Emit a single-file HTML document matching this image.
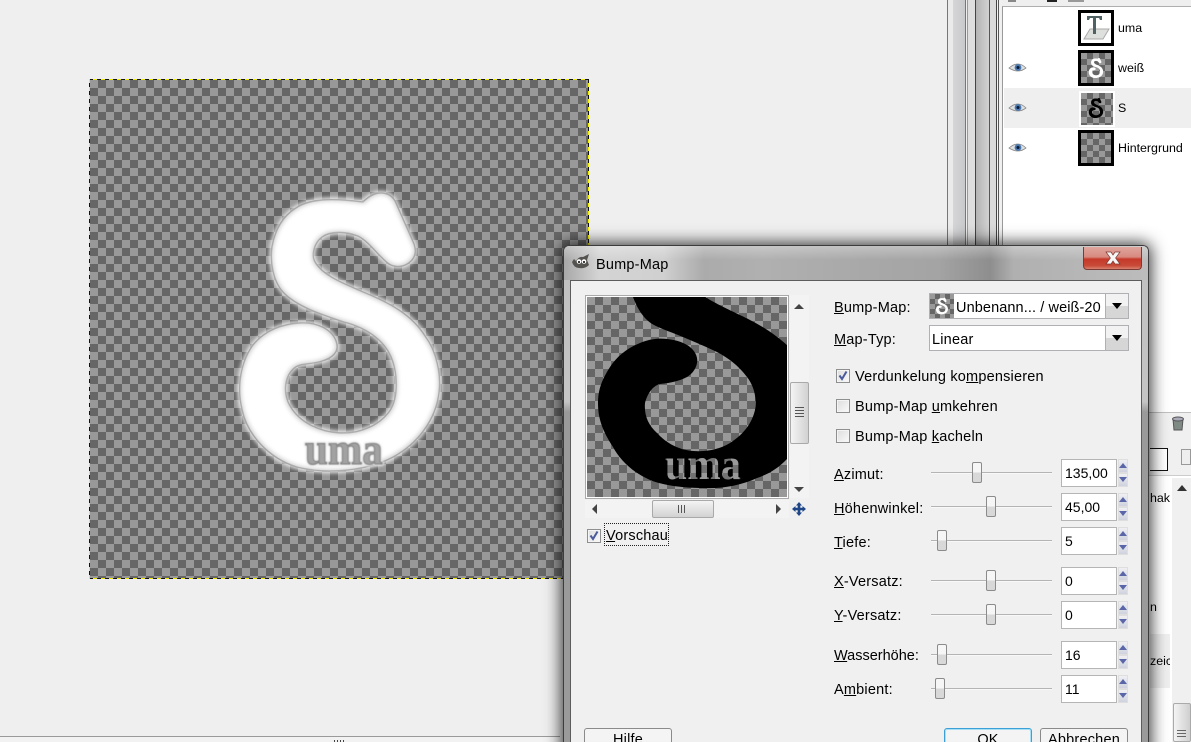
<!DOCTYPE html>
<html><head><meta charset="utf-8"><title>Bump-Map</title>
<style>
html,body{margin:0;padding:0;background:#efefef}
#r{position:relative;width:1191px;height:742px;overflow:hidden;background:#efefef;font-family:"Liberation Sans",sans-serif;font-size:14.5px;letter-spacing:.2px;color:#000}
#r div,#r span.a{position:absolute}
.t{white-space:nowrap;line-height:18px;height:18px;margin-top:1px}
.s{font-size:12.4px;line-height:14px;height:14px;letter-spacing:0;margin-top:0}
u{text-decoration:underline}
.chk{background:repeating-conic-gradient(#666 0 25%,#999 0 50%) 0 0/16px 16px}
.cb{width:12px;height:12px;border:1px solid #8e8f8f;background:linear-gradient(135deg,#dcdcdc,#fafafa);box-shadow:inset 0 0 0 1px #f4f4f4}
.combo{background:#fff;border:1px solid #aeb0b3;box-sizing:border-box}
.arr{right:0;top:0;bottom:0;width:22px;border-left:1px solid #aeb0b3;background:linear-gradient(#f2f2f2 50%,#d6d6d6 50%)}
.arr:after{content:"";position:absolute;left:6px;top:9px;border:5px solid transparent;border-top:6px solid #000;border-bottom:0}
.track{left:931px;width:121px;height:1px;background:#b4b4b4;box-shadow:0 1px 0 #f8f8f8}
.thumb{width:8px;height:19px;border:1px solid #8b8b8b;border-radius:2px;background:linear-gradient(#f6f6f6 50%,#d8d8d8 50%)}
.inp{left:1061px;width:56px;height:28px;box-sizing:border-box;background:#fff;border:1px solid #b5b5b5;padding-left:3px;line-height:27px;font-size:14px;letter-spacing:0}
.sp{left:1118px;width:10px;height:14px;background:linear-gradient(#f0f0f4,#cfd2de);border:1px solid #dedede;box-sizing:border-box}
.sp:after{content:"";position:absolute;left:0;top:3px;border:4px solid transparent}
.up:after{border-bottom:5px solid #5a66a8;border-top:0}
.dn:after{border-top:5px solid #5a66a8;border-bottom:0}
.btn{height:30px;box-sizing:border-box;border:1px solid #8a8a8a;border-radius:3px;background:linear-gradient(#f4f4f4 45%,#dddddd 50%,#cfcfcf);text-align:center;line-height:22px}
.ar{width:0;height:0}
</style></head><body><div id="r">

<!-- canvas -->
<div class="chk" style="left:90px;top:80px;width:499px;height:498px"></div>
<div style="left:89px;top:79px;width:500px;height:1px;background:repeating-linear-gradient(90deg,#111 0 4px,#f5f000 4px 8px)"></div>
<div style="left:89px;top:578px;width:500px;height:1px;background:repeating-linear-gradient(90deg,#111 0 4px,#f5f000 4px 8px)"></div>
<div style="left:89px;top:79px;width:1px;height:500px;background:repeating-linear-gradient(180deg,#f5f000 0 4px,#111 4px 8px)"></div>
<div style="left:588px;top:79px;width:1px;height:500px;background:repeating-linear-gradient(180deg,#111 0 4px,#f5f000 4px 8px)"></div>

<svg width="1191" height="742" style="position:absolute;left:0;top:0">
<defs>
<filter id="b1" x="-20%" y="-20%" width="140%" height="140%"><feGaussianBlur stdDeviation="1.8"/></filter>
<filter id="b2" x="-20%" y="-20%" width="140%" height="140%"><feMorphology operator="erode" radius="1.6"/><feGaussianBlur stdDeviation="2"/></filter>
<filter id="b3" x="-20%" y="-20%" width="140%" height="140%"><feGaussianBlur stdDeviation="1"/></filter>
<filter id="b4" x="-20%" y="-20%" width="140%" height="140%"><feGaussianBlur stdDeviation=".45"/></filter>
<pattern id="pk" width="16" height="16" patternUnits="userSpaceOnUse" x="587" y="297"><rect width="16" height="16" fill="#727272"/><rect width="8" height="8" fill="#999"/><rect x="8" y="8" width="8" height="8" fill="#999"/></pattern>
<clipPath id="pc"><rect x="587" y="297" width="200" height="200"/></clipPath>
<path id="S" d="M363 202C369 196 375 193 381 193C388 193 392 196 395 201L414 244C416 250 416 256 411 261C405 267 396 268 389 264C380 258 370 242 358 236C345 231 330 231 322 237C314 243 311 255 315 262C323 276 345 284 363 292C390 303 412 315 425 336C437 352 441 375 439 392C436 420 417 444 393 457C365 472 325 474 297 467C268 458 247 434 242 409C237 388 240 363 253 345C265 330 283 324 300 323C318 322 332 330 336 341C340 352 332 358 322 361C310 365 300 362 293 369C284 378 283 394 290 406C300 423 320 432 340 433C362 434 380 424 389 412C398 400 398 378 393 362C387 342 368 328 344 322C320 314 296 306 283 292C273 281 270 262 272 247C275 230 283 216 296 208C312 197 340 199 363 202Z"/>
</defs>
<use href="#S" fill="none" stroke="#fff" stroke-width="5" filter="url(#b1)" opacity=".7"/>
<use href="#S" fill="#cfcfcf" stroke="#969696" stroke-width="1.4"/>
<use href="#S" fill="#fff" filter="url(#b2)"/>
<text x="305" y="464" font-family="Liberation Serif" font-weight="700" font-size="44" textLength="78" lengthAdjust="spacingAndGlyphs" fill="none" stroke="#e4e4e4" stroke-width="3" filter="url(#b3)">uma</text>
<text x="305" y="464" font-family="Liberation Serif" font-weight="700" font-size="44" textLength="78" lengthAdjust="spacingAndGlyphs" fill="#a2a2a2" stroke="#787878" stroke-width=".9" filter="url(#b4)">uma</text>
</svg>

<!-- bottom bar -->
<div style="left:0;top:736px;width:560px;height:1px;background:#9a9a9a"></div>
<div style="left:0;top:737px;width:560px;height:5px;background:#f2f2f2"></div>
<div style="left:334px;top:740px;width:11px;height:2px;background:repeating-linear-gradient(90deg,#444 0 1px,#f2f2f2 1px 3px)"></div>

<!-- right dock stripes -->
<div style="left:947px;top:0;width:1px;height:246px;background:#777"></div>
<div style="left:948px;top:0;width:5px;height:246px;background:#ebebeb"></div>
<div style="left:953px;top:0;width:12px;height:246px;background:linear-gradient(90deg,#d6d6d8,#c8c9ca)"></div>
<div style="left:965px;top:0;width:1px;height:246px;background:#777"></div>
<div style="left:966px;top:0;width:1px;height:246px;background:#eee"></div>
<div style="left:967px;top:0;width:1px;height:246px;background:#999"></div>
<div style="left:968px;top:0;width:7px;height:246px;background:#dedede"></div>
<div style="left:975px;top:0;width:1px;height:246px;background:#444"></div>
<div style="left:976px;top:0;width:13px;height:246px;background:linear-gradient(90deg,#b4b4b4,#d2d2d2)"></div>
<div style="left:989px;top:0;width:1px;height:246px;background:#555"></div>
<div style="left:990px;top:0;width:6px;height:246px;background:#dadada"></div>
<div style="left:996px;top:0;width:1px;height:246px;background:#444"></div>
<div style="left:997px;top:0;width:1px;height:246px;background:#f4f4f4"></div>
<div style="left:998px;top:0;width:1px;height:246px;background:#555"></div>
<div style="left:999px;top:0;width:3px;height:246px;background:#f0f0f0"></div>

<!-- layers panel -->
<div style="left:1002px;top:6px;width:189px;height:410px;background:#fff;border-top:1px solid #aeaeae;border-left:1px solid #999"></div>
<div style="left:1008px;top:0;width:8px;height:2px;background:#888"></div>
<div style="left:1047px;top:0;width:10px;height:2px;background:#222"></div>
<div style="left:1068px;top:0;width:16px;height:2px;background:#999"></div>
<div style="left:1004px;top:88px;width:187px;height:40px;background:#efefef"></div>

<div style="left:1078px;top:10px;width:30px;height:30px;border:3px solid #000;background:#fff"></div>
<svg width="36" height="36" style="position:absolute;left:1078px;top:10px"><path d="M6 29L12 19H31L25 29Z" fill="#dde0dc" stroke="#aaa"/><path d="M9 6H24V10H22L21 8H18V24H15V8H12L11 10H9Z" fill="#4f6163"/></svg>
<div class="chk" style="left:1078px;top:50px;width:30px;height:30px;border:3px solid #000;background-size:12px 12px"></div>
<div class="chk" style="left:1080px;top:92px;width:32px;height:32px;border:1px solid #fff;box-shadow:0 0 0 1px #fff;background-size:12px 12px"></div>
<div class="chk" style="left:1078px;top:130px;width:30px;height:30px;border:3px solid #000;background-size:12px 12px"></div>
<svg width="1191" height="742" style="position:absolute;left:0;top:0">
<use href="#S" fill="#fff" transform="translate(1071.5 44.1) scale(.072)"/>
<use href="#S" fill="#000" transform="translate(1071.5 84.1) scale(.072)"/>
</svg>

<svg width="20" height="100" style="position:absolute;left:1008px;top:60px">
<g id="e"><path d="M1 8Q10 0 18 8Q10 14 1 8Z" fill="#dfe0e0" stroke="#888" stroke-width=".8"/><circle cx="10" cy="7.5" r="3.4" fill="#4a78b0"/><circle cx="10" cy="7.5" r="1.5" fill="#0b1a33"/></g>
<use href="#e" y="40"/><use href="#e" y="80"/></svg>

<div class="t s" style="left:1118px;top:21px">uma</div>
<div class="t s" style="left:1118px;top:61px">weiß</div>
<div class="t s" style="left:1118px;top:101px">S</div>
<div class="t s" style="left:1118px;top:141px">Hintergrund</div>

<!-- lower right panel -->
<div style="left:1149px;top:415px;width:42px;height:327px;background:#fff"></div>
<div style="left:1149px;top:412px;width:42px;height:64px;background:#f0f0f0;border-top:1px solid #c0c0c0;border-bottom:1px solid #ccc;box-sizing:border-box"></div>
<svg width="18" height="18" style="position:absolute;left:1169px;top:415px"><path d="M4 4H14L13 15H5Z" fill="#7f8a85" stroke="#555"/><ellipse cx="9" cy="4" rx="5.5" ry="2" fill="#aab" stroke="#555"/></svg>
<div style="left:1150px;top:448px;width:17px;height:21px;background:#fff;border:1px solid #111;border-left:0"></div>
<div style="left:1181px;top:449px;width:10px;height:16px;background:#eee;border:1px solid #999;box-sizing:border-box"></div>
<div class="t s" style="left:1150px;top:491px;width:20px;overflow:hidden">haka</div>
<div class="t s" style="left:1150px;top:600px">n</div>
<div style="left:1150px;top:634px;width:20px;height:54px;background:#efefef"></div>
<div class="t s" style="left:1150px;top:654px;width:20px;overflow:hidden">zeic</div>
<div style="left:1172px;top:478px;width:19px;height:264px;background:#f0f0f0"></div>
<div class="ar" style="left:1177px;top:485px;border:5px solid transparent;border-bottom:6px solid #333;border-top:0"></div>
<div style="left:1173px;top:703px;width:18px;height:39px;box-sizing:border-box;border:1px solid #aaa;border-radius:2px;background:linear-gradient(90deg,#f4f4f4,#cfcfcf)"></div>
<div style="left:1177px;top:730px;width:9px;height:9px;background:repeating-linear-gradient(180deg,#666 0 1px,transparent 1px 3px)"></div>

<!-- dialog frame -->
<div style="left:563px;top:245px;width:586px;height:520px;border-radius:6px 6px 0 0;box-sizing:border-box;border:1px solid #3c3c3c;border-bottom:0;background:linear-gradient(180deg,#c0c0c0 0,#c4c4c4 30%,#9a9a9a 32%,#9a9a9a 100%);box-shadow:0 0 16px 2px rgba(0,0,0,.78)"></div>
<div style="left:564px;top:246px;width:584px;height:34px;border-radius:5px 5px 0 0;background:linear-gradient(90deg,#a8a8a8 0,#d4d4d4 6%,#d0d0d0 17%,#ababab 24%,#b0b0b0 34%,#a8a8a8 52%,#a4a4a4 64%,#8e8e8e 73%,#b0b0b0 77%,#bcbcbc 100%)"></div>
<div style="left:564px;top:246px;width:584px;height:14px;border-radius:5px 5px 0 0;background:linear-gradient(rgba(255,255,255,.3),rgba(255,255,255,0))"></div>

<svg width="20" height="18" style="position:absolute;left:571px;top:254px"><path d="M1 8L3 5L5 7Q8 2 12 3L18 0L16 6L18 11Q14 15 8 14Q3 14 1 8Z" fill="#55534f"/><circle cx="8" cy="7.5" r="2.3" fill="#fff"/><circle cx="13" cy="7.5" r="2.3" fill="#fff"/><circle cx="8" cy="8" r="1" fill="#000"/><circle cx="13" cy="8" r="1" fill="#000"/></svg>
<div class="t" style="left:596px;top:255px;color:#000">Bump-Map</div>

<div style="left:1083px;top:247px;width:59px;height:23px;box-sizing:border-box;border:1px solid #7c3a34;border-top:0;border-radius:0 0 4px 4px;background:linear-gradient(#dfa59e 0,#d88a80 45%,#c6392a 55%,#c84a38 85%,#d9826f 100%)"></div>
<svg width="20" height="16" style="position:absolute;left:1103px;top:250px"><path d="M3 2H8L10 5L12 2H17L12.6 8L17 14H12L10 11L8 14H3L7.4 8Z" fill="#f6f6f6" stroke="#7d3a32" stroke-width=".7"/></svg>

<!-- dialog body -->
<div style="left:570px;top:280px;width:572px;height:462px;background:#f0f0f0;box-sizing:border-box;border:1px solid #5c5c5c;border-bottom:0"></div>

<!-- preview -->
<div style="left:585px;top:295px;width:204px;height:204px;box-sizing:border-box;border:1px solid #a9a9a9;box-shadow:inset 0 0 0 1px #fff"></div>
<div style="left:587px;top:297px;width:200px;height:200px;background:repeating-conic-gradient(#666 0 25%,#999 0 50%) 0 0/16px 16px"></div>
<svg width="1191" height="742" style="position:absolute;left:0;top:0">
<g clip-path="url(#pc)">
<path d="M633 290L697 290C705 300 735 312 750 320C770 330 790 345 800 360L800 440C790 460 775 472 757 478C740 486 720 489 703 488C685 488 665 486 650 480C632 472 620 460 613 447C602 430 598 418 598 403C598 388 603 378 610 367C618 355 628 348 640 343C650 339 658 338 667 339C677 340 685 343 690 347C696 352 698 358 697 363C696 369 692 374 687 377C680 381 670 383 660 384C652 386 647 395 645 403C644 415 648 425 657 433C667 444 680 450 693 451C708 452 720 449 730 443C744 434 752 423 755 410C757 398 754 386 747 377C738 365 728 358 717 352C702 345 688 339 673 333C660 328 652 325 647 320C640 313 636 305 633 297Z" fill="#000"/>
<text x="665" y="479" font-family="Liberation Serif" font-weight="700" font-size="44" textLength="76" lengthAdjust="spacingAndGlyphs" fill="url(#pk)">uma</text>
</g></svg>

<!-- vertical scrollbar -->
<div style="left:790px;top:295px;width:19px;height:203px;background:#f3f3f3"></div>
<div class="ar" style="left:794px;top:304px;border:5px solid transparent;border-bottom:5px solid #444;border-top:0"></div>
<div class="ar" style="left:794px;top:487px;border:5px solid transparent;border-top:5px solid #444;border-bottom:0"></div>
<div style="left:790px;top:382px;width:19px;height:62px;box-sizing:border-box;border:1px solid #a9a9a9;border-radius:2px;background:linear-gradient(90deg,#f4f4f4,#d2d2d2)"></div>
<div style="left:795px;top:407px;width:9px;height:12px;background:repeating-linear-gradient(180deg,#555 0 1px,transparent 1px 3px)"></div>
<!-- horizontal scrollbar -->
<div style="left:585px;top:500px;width:204px;height:18px;background:#f3f3f3"></div>
<div class="ar" style="left:592px;top:504px;border:5px solid transparent;border-right:5px solid #444;border-left:0"></div>
<div class="ar" style="left:776px;top:504px;border:5px solid transparent;border-left:5px solid #444;border-right:0"></div>
<div style="left:652px;top:500px;width:62px;height:18px;box-sizing:border-box;border:1px solid #a9a9a9;border-radius:2px;background:linear-gradient(#f4f4f4,#d2d2d2)"></div>
<div style="left:678px;top:505px;width:9px;height:8px;background:repeating-linear-gradient(90deg,#555 0 1px,transparent 1px 3px)"></div>
<svg width="16" height="16" style="position:absolute;left:791px;top:501px"><path d="M8 1L11 4.5H9.3V6.7H11.5V5L15 8L11.5 11V9.3H9.3V11.5H11L8 15L5 11.5H6.7V9.3H4.5V11L1 8L4.5 5V6.7H6.7V4.5H5Z" fill="#1f4687"/></svg>

<!-- Vorschau -->
<div class="cb" style="left:587px;top:529px"></div>
<svg width="14" height="14" style="position:absolute;left:587px;top:529px"><path d="M3.5 6.5L6 10L10.5 2.5" fill="none" stroke="#4a5a9c" stroke-width="2"/></svg>
<div style="left:604px;top:523px;width:63px;height:21px;border:1px dotted #222"></div>
<div class="t" style="left:606px;top:526px"><u>V</u>orschau</div>

<!-- labels -->
<div class="t" style="left:834px;top:298px"><u>B</u>ump-Map:</div>
<div class="t" style="left:834px;top:330px"><u>M</u>ap-Typ:</div>
<div class="t" style="left:834px;top:465px"><u>A</u>zimut:</div>
<div class="t" style="left:834px;top:499px"><u>H</u>öhenwinkel:</div>
<div class="t" style="left:834px;top:533px"><u>T</u>iefe:</div>
<div class="t" style="left:834px;top:572px"><u>X</u>-Versatz:</div>
<div class="t" style="left:834px;top:606px"><u>Y</u>-Versatz:</div>
<div class="t" style="left:834px;top:646px;letter-spacing:0"><u>W</u>asserhöhe:</div>
<div class="t" style="left:834px;top:680px">A<u>m</u>bient:</div>

<!-- combos -->
<div class="combo" style="left:929px;top:293px;width:200px;height:26px"><div class="arr"></div></div>
<div class="chk" style="left:930px;top:294px;width:24px;height:24px;background-size:10px 10px"></div>
<svg width="1191" height="742" style="position:absolute;left:0;top:0"><use href="#S" fill="#fff" transform="translate(921.6 286.1) scale(.06)"/></svg>
<div class="t" style="left:956px;top:298px;letter-spacing:.1px">Unbenann... / weiß-20</div>
<div class="combo" style="left:929px;top:325px;width:200px;height:26px"><div class="arr"></div></div>
<div class="t" style="left:932px;top:330px">Linear</div>

<!-- checkboxes -->
<div class="cb" style="left:836px;top:369px"></div>
<svg width="14" height="14" style="position:absolute;left:836px;top:369px"><path d="M3.5 6.5L6 10L10.5 2.5" fill="none" stroke="#4a5a9c" stroke-width="2"/></svg>
<div class="t" style="left:855px;top:367px">Verdunkelung ko<u>m</u>pensieren</div>
<div class="cb" style="left:836px;top:399px"></div>
<div class="t" style="left:855px;top:397px">Bump-Map <u>u</u>mkehren</div>
<div class="cb" style="left:836px;top:429px"></div>
<div class="t" style="left:855px;top:427px">Bump-Map <u>k</u>acheln</div>

<!-- sliders -->
<div class="track" style="top:472px"></div><div class="thumb" style="left:972px;top:462px"></div>
<div class="track" style="top:506px"></div><div class="thumb" style="left:986px;top:496px"></div>
<div class="track" style="top:540px"></div><div class="thumb" style="left:937px;top:530px"></div>
<div class="track" style="top:580px"></div><div class="thumb" style="left:986px;top:570px"></div>
<div class="track" style="top:614px"></div><div class="thumb" style="left:986px;top:604px"></div>
<div class="track" style="top:654px"></div><div class="thumb" style="left:937px;top:644px"></div>
<div class="track" style="top:688px"></div><div class="thumb" style="left:935px;top:678px"></div>

<!-- spins -->
<div class="inp" style="top:459px">135,00</div><div class="sp up" style="top:459px"></div><div class="sp dn" style="top:473px"></div>
<div class="inp" style="top:493px">45,00</div><div class="sp up" style="top:493px"></div><div class="sp dn" style="top:507px"></div>
<div class="inp" style="top:527px">5</div><div class="sp up" style="top:527px"></div><div class="sp dn" style="top:541px"></div>
<div class="inp" style="top:567px">0</div><div class="sp up" style="top:567px"></div><div class="sp dn" style="top:581px"></div>
<div class="inp" style="top:601px">0</div><div class="sp up" style="top:601px"></div><div class="sp dn" style="top:615px"></div>
<div class="inp" style="top:641px">16</div><div class="sp up" style="top:641px"></div><div class="sp dn" style="top:655px"></div>
<div class="inp" style="top:675px">11</div><div class="sp up" style="top:675px"></div><div class="sp dn" style="top:689px"></div>

<!-- buttons -->
<div class="btn" style="left:584px;top:728px;width:88px">Hilfe</div>
<div class="btn" style="left:944px;top:728px;width:88px;border-color:#3c9fd6;box-shadow:inset 0 0 0 1px #a6e0f6">OK</div>
<div class="btn" style="left:1040px;top:728px;width:88px">Abbrechen</div>

</div></body></html>
